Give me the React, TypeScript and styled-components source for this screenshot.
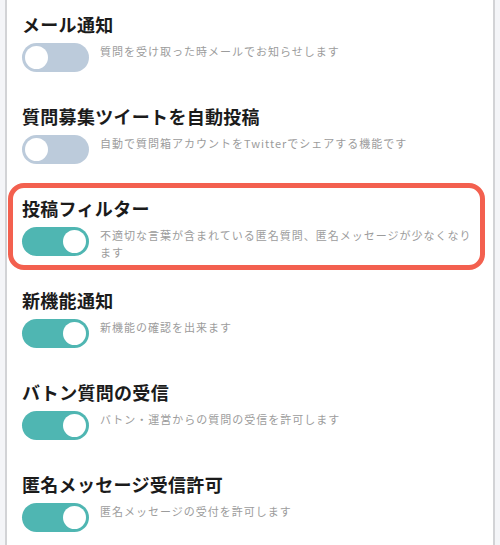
import React from 'react';
import { styled, createGlobalStyle } from 'styled-components';

const GlobalStyle = createGlobalStyle`
	html, body {
		margin: 0;
		padding: 0;
		background-color: #f4f5f8;
		font-family: 'Noto Sans CJK JP', 'Noto Sans', sans-serif;
	}
`;

interface Setting {
	title: string;
	description: string;
	enabled: boolean;
	highlighted?: boolean;
}

const settings: Setting[] = [
	{
		title: 'メール通知',
		description: '質問を受け取った時メールでお知らせします',
		enabled: false,
	},
	{
		title: '質問募集ツイートを自動投稿',
		description: '自動で質問箱アカウントをTwitterでシェアする機能です',
		enabled: false,
	},
	{
		title: '投稿フィルター',
		description:
			'不適切な言葉が含まれている匿名質問、匿名メッセージが少なくなります',
		enabled: true,
		highlighted: true,
	},
	{
		title: '新機能通知',
		description: '新機能の確認を出来ます',
		enabled: true,
	},
	{
		title: 'バトン質問の受信',
		description: 'バトン・運営からの質問の受信を許可します',
		enabled: true,
	},
	{
		title: '匿名メッセージ受信許可',
		description: '匿名メッセージの受付を許可します',
		enabled: true,
	},
];

const SettingItem: React.FC<Setting> = ({
	title,
	description,
	enabled,
	highlighted,
}) => {
	return (
		<ItemWrap $highlighted={highlighted}>
			<h3>{title}</h3>
			<RowWrap>
				<Toggle $on={enabled} role='switch' aria-checked={enabled}>
					<span className='knob' />
				</Toggle>
				<p>{description}</p>
			</RowWrap>
		</ItemWrap>
	);
};

export default function App() {
	return (
		<>
			<GlobalStyle />
			<PageWrap>
				{settings.map((item, index) => (
					<SettingItem key={index} {...item} />
				))}
			</PageWrap>
		</>
	);
}

const PageWrap = styled.main`
	margin: 0 5px;
	min-height: 545px;
	background-color: #ffffff;
	border-left: 2px solid #d2d3d6;
	border-right: 2px solid #d2d3d6;
	box-sizing: border-box;
`;

const ItemWrap = styled.section<{ $highlighted?: boolean }>`
	position: relative;
	height: 92px;
	padding: 12px 15px 0 15px;
	box-sizing: border-box;

	& h3 {
		margin: 0 0 7px;
		font-size: 18px;
		line-height: 24px;
		font-weight: 700;
		letter-spacing: 0.3px;
		color: #1b1b1b;
	}

	&::before {
		content: '';
		display: ${({ $highlighted }) => ($highlighted ? 'block' : 'none')};
		position: absolute;
		top: -1px;
		bottom: 6px;
		left: 1px;
		right: 8px;
		border: 5px solid #f3604f;
		border-radius: 16px;
		pointer-events: none;
	}
`;

const RowWrap = styled.div`
	display: flex;
	align-items: flex-start;
	gap: 11px;

	& p {
		flex: 1;
		margin: 0;
		font-size: 11px;
		line-height: 17px;
		letter-spacing: 1px;
		color: #9c9c9c;
	}
`;

const Toggle = styled.div<{ $on: boolean }>`
	position: relative;
	flex-shrink: 0;
	width: 67px;
	height: 29px;
	border-radius: 15px;
	background-color: ${({ $on }) => ($on ? '#4fb6b2' : '#bccbdb')};

	& .knob {
		position: absolute;
		top: 3px;
		left: ${({ $on }) => ($on ? '41px' : '3px')};
		width: 23px;
		height: 23px;
		border-radius: 50%;
		background-color: #ffffff;
	}
`;
